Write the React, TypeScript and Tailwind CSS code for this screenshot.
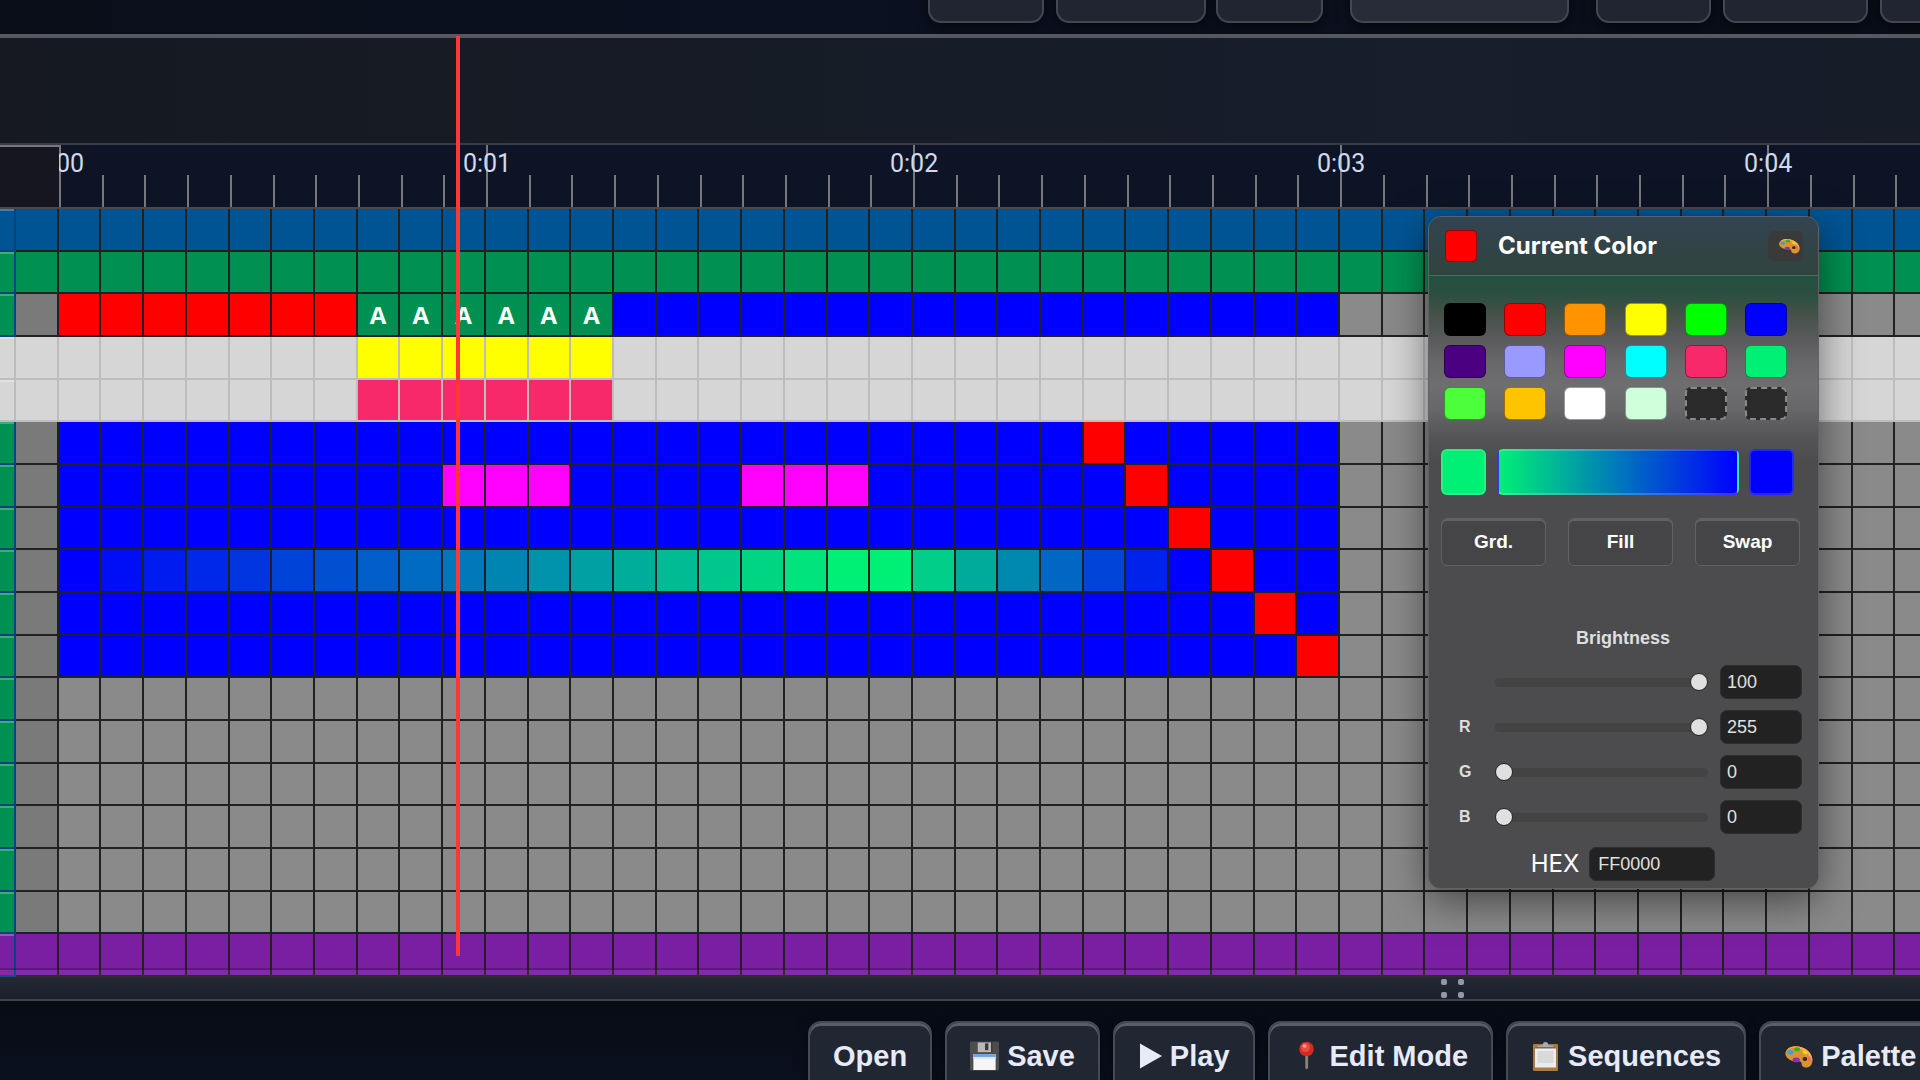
import React, { useState } from 'react';

const COLS = 45;
const BLUE = '#0000ff';
const RED = '#ff0000';
const GRAY = '#8a8a8a';
const LIGHT = '#d6d6d6';

const mix = (t: number) => `rgb(0, ${Math.round(240 * t)}, ${Math.round(255 - 138 * t)})`;

// col 0 is the first frame, col -1 is the lead-in
const cellColor = (row: number, col: number): string => {
  if (row === 0) return '#005493';
  if (row === 1) return '#009051';
  if (row === 17) return '#7b1fa2';
  if (row === 3 || row === 4) {
    if (col >= 7 && col <= 12) return row === 3 ? '#ffff00' : '#f7296b';
    return LIGHT;
  }
  if (col < 0) return '#7a7a7a';
  if (row > 10 || col > 29) return GRAY;
  if (row === 2) {
    if (col < 7) return RED;
    return col < 13 ? '#009051' : BLUE;
  }
  if (col === row + 19) return RED;
  if (row === 6 && ((col >= 9 && col <= 11) || (col >= 16 && col <= 18))) return '#ff00ff';
  if (row === 8) {
    if (col <= 18) return mix(col / 18);
    if (col <= 26) return mix((26 - col) / 7);
  }
  return BLUE;
};

const rowLabels = Array.from({ length: 18 }, (_, r) => {
  if (r === 0) return '#005493';
  if (r === 3 || r === 4) return LIGHT;
  return r === 17 ? '#7b1fa2' : '#009051';
});

const swatches = [
  '#000000', '#ff0000', '#ff9300', '#ffff00', '#00ff00', '#0000ff',
  '#4b0082', '#9999ff', '#ff00ff', '#00ffff', '#f7296b', '#00f076',
  '#4dff3a', '#ffc400', '#ffffff', '#d0ffdc', null, null
];

const PaletteIcon = ({ className }: { className: string }) => (
  <svg viewBox="0 0 32 32" preserveAspectRatio="none" className={className} aria-hidden="true">
    <path d="M4 7C9 2 19 3 25 8c6 5 8 13 5 18-3 4-8 4-10 1-1-2 0-4-2-5-3-1-5 1-9-1C2 18-1 12 4 7Z" fill="#d9942f" />
    <path d="M4 7C9 2 19 3 25 8c5 4 7 10 6 14-2-6-6-12-13-15C12 5 7 5 3 9Z" fill="#eeb352" />
    <ellipse cx="23" cy="19" rx="2.6" ry="2.4" fill="#3a2412" />
    <ellipse cx="7" cy="11" rx="3.2" ry="2.6" fill="#2aa6ea" />
    <ellipse cx="14.500" cy="7.500" rx="3.2" ry="2.4" fill="#38b21d" />
    <ellipse cx="23" cy="11" rx="3" ry="2" transform="rotate(35 23 11)" fill="#f3cf1d" />
    <ellipse cx="28" cy="19" rx="1.800" ry="3" transform="rotate(-20 28 19)" fill="#f36a5c" />
    <ellipse cx="13.500" cy="20" rx="4" ry="2.800" fill="#8d2cc4" />
  </svg>
);

const FloppyIcon = () => (
  <svg viewBox="0 0 30 30" className="w-[29px] h-[30px]" aria-hidden="true">
    <rect width="30" height="30" rx="1" fill="#4d4d4d" />
    <rect x="8" y="1" width="14" height="10" fill="#b9b9b9" />
    <rect x="15.500" y="2" width="3.500" height="7" fill="#3b3b3b" />
    <rect x="22" width="1" height="11" fill="#2c2c2c" />
    <rect x="3.500" y="13" width="23" height="16.500" fill="#f6f6f6" />
    <rect x="3.500" y="13" width="23" height="3" fill="#6aa5e6" />
    <rect x="3.500" y="16" width="23" height="2" fill="#d6e6f8" />
  </svg>
);

const PlayIcon = () => (
  <svg viewBox="0 0 24 26" className="w-6 h-[26px]" aria-hidden="true">
    <path d="M2 0.500 24 13 2 25.500Z" fill="#e6ebf7" />
  </svg>
);

const PinIcon = () => (
  <svg viewBox="0 0 29 30" className="w-[29px] h-[30px]" aria-hidden="true">
    <path d="M12.300 14h2.800v13l-1.400 1.500-1.400-1.500Z" fill="#8d8178" />
    <circle cx="13.500" cy="8" r="7.300" fill="#d42a22" />
    <circle cx="12.500" cy="6.500" r="4.500" fill="#ec4a3e" />
    <ellipse cx="11.500" cy="5" rx="2" ry="1.800" fill="#ff9c90" />
  </svg>
);

const ClipboardIcon = () => (
  <svg viewBox="0 0 29 30" className="w-[29px] h-[30px]" aria-hidden="true">
    <rect x="2" y="3" width="25" height="27" rx="1" fill="#a97b42" />
    <rect x="4" y="6" width="21" height="20.500" fill="#ececec" />
    <rect x="6.500" y="10" width="16" height="12" fill="#d9d9d9" />
    <path d="M7 6.500V4.500h4.500C12 2 12.500 1 14.500 1S17 2 17.500 4.500H22v2Z" fill="#a9adb0" />
    <rect x="4" y="6" width="21" height="1.500" fill="#6d6d6d" />
  </svg>
);

const toolbar = [
  { label: 'Open', icon: null },
  { label: 'Save', icon: <FloppyIcon /> },
  { label: 'Play', icon: <PlayIcon /> },
  { label: 'Edit Mode', icon: <PinIcon /> },
  { label: 'Sequences', icon: <ClipboardIcon /> },
  { label: 'Palette', icon: <PaletteIcon className="w-[29px] h-[27px]" /> }
];

const topButton = 'h-12 shrink-0 rounded-[13px] border-2 border-[#434751] shadow-[0_5px_14px_rgba(0,0,0,0.5)]';

const Header = () => (
  <header className="h-[34px] shrink-0 overflow-hidden flex items-end pb-[11px] pl-[928px] bg-[linear-gradient(90deg,#0a0e19,#0a1120_40%,#0a0e19)]">
    <button aria-label="Undo" className={`${topButton} w-[116px] bg-[#202531]`} />
    <button aria-label="Group" className={`${topButton} w-[150px] ml-3 bg-[#202531]`} />
    <button aria-label="Redo" className={`${topButton} w-[107px] ml-[10px] bg-[#202531]`} />
    <button aria-label="Mode" className={`${topButton} w-[219px] ml-[27px] bg-[#282c38]`} />
    <button aria-label="Copy" className={`${topButton} w-[115px] ml-[27px] bg-[#202531]`} />
    <button aria-label="Paste" className={`${topButton} w-[145px] ml-3 bg-[#202531]`} />
    <button aria-label="Cut" className={`${topButton} w-[115px] ml-3 bg-[#202531]`} />
  </header>
);

const Ruler = () => (
  <div className="flex h-[66px] shrink-0 border-t-2 border-b-2 border-t-[#3a3c44] border-b-[#48494e] bg-[#0d1425]">
    <div className="w-[61px] shrink-0 bg-[#15161f] border-t-2 border-r-2 border-[#77787c]" />
    <div className="flex-1 overflow-hidden -ml-[2px]">
      <div className="h-full grid grid-cols-[repeat(44,minmax(0,1fr))] items-end -mr-[18px]">
        {Array.from({ length: COLS - 1 }, (_, i) => (
          <div key={i} className={`relative border-l-2 border-[#77787c] ${i % 10 === 0 ? 'h-full' : 'h-8'}`}>
            {i % 10 === 0 && (
              <span className="absolute -left-px top-[3px] -translate-x-1/2 text-[25px] leading-8 font-['Roboto',sans-serif] text-[#d3d9ea]">
                0:0{i / 10}
              </span>
            )}
          </div>
        ))}
      </div>
    </div>
  </div>
);

const Tracks = () => (
  <div className="flex flex-1 min-h-0 overflow-hidden relative">
    <div className="w-4 shrink-0 grid grid-rows-[repeat(18,minmax(0,1fr))]">
      {rowLabels.map((color, r) => (
        <div
          key={r}
          className={`border-r-2 border-b-2 ${color === LIGHT ? 'border-[#bdbdbd]' : 'border-[#03457a]'} shadow-[inset_0_2px_0_rgba(255,255,255,0.25)]`}
          style={{ backgroundColor: color }}
        />
      ))}
    </div>
    <div className="flex-1 -mr-[18px] grid grid-rows-[repeat(18,minmax(0,1fr))] grid-cols-[repeat(45,minmax(0,1fr))]">
      {Array.from({ length: 18 * COLS }, (_, i) => {
        const row = Math.floor(i / COLS);
        const col = (i % COLS) - 1;
        const light = row === 3 || row === 4;
        return (
          <div
            key={i}
            className={`border-r-2 border-b-2 flex items-center justify-center text-2xl leading-6 font-bold text-white font-['Open_Sans',sans-serif] ${light ? 'border-[#bdbdbd]' : 'border-[#212121]'}`}
            style={{ backgroundColor: cellColor(row, col) }}
          >
            {row === 2 && col >= 7 && col <= 12 ? 'A' : ''}
          </div>
        );
      })}
    </div>
    {/* scrollbar track */}
    <div className="absolute inset-x-0 bottom-0 h-[9px] border-t-2 border-black/30 bg-white/5" />
  </div>
);

interface ChannelProps {
  label: string;
  name: string;
  max: number;
  value: number;
  onChange: (v: number) => void;
}

const Channel: React.FC<ChannelProps> = ({ label, name, max, value, onChange }) => (
  <div className="flex items-center h-[34px]">
    <label htmlFor={`${name}-range`} className="w-[54px] pl-[18px] text-base leading-6 font-bold text-[#dedede]">{label}</label>
    <input
      id={`${name}-range`}
      aria-label={name}
      type="range"
      min={0}
      max={max}
      value={value}
      onChange={(e) => onChange(Number(e.target.value))}
      className="w-[213px] h-[9px] appearance-none rounded-full bg-[#434343] [&::-webkit-slider-thumb]:appearance-none [&::-webkit-slider-thumb]:w-[18px] [&::-webkit-slider-thumb]:h-[18px] [&::-webkit-slider-thumb]:rounded-full [&::-webkit-slider-thumb]:bg-[#e0e0e0] [&::-webkit-slider-thumb]:border [&::-webkit-slider-thumb]:border-[#222222]"
    />
    <input
      aria-label={`${name} value`}
      type="text"
      value={value}
      onChange={(e) => onChange(Number(e.target.value) || 0)}
      className="ml-3 w-[82px] h-[34px] rounded-[7px] bg-[#222222] border border-[#2e2e2e] px-[6px] text-lg leading-6 text-[#e0e0e0]"
    />
  </div>
);

const smallButton = 'w-[105px] h-12 rounded-md border border-[#626264] bg-[#454547] text-[19px] leading-6 font-bold text-white shadow-[inset_0_2px_0_#626264]';

const ColorPanel = () => {
  const [brightness, setBrightness] = useState(100);
  const [rgb, setRgb] = useState([255, 0, 0]);
  const [hex, setHex] = useState('FF0000');

  const setChannel = (i: number, v: number) => {
    const next = rgb.map((c, n) => (n === i ? v : c));
    setRgb(next);
    setHex(next.map((c) => c.toString(16).padStart(2, '0')).join('').toUpperCase());
  };

  return (
    <section className="absolute right-[101px] top-[216px] w-[391px] overflow-hidden rounded-[13px] border border-[#5d6466] bg-[#4c4c4e] shadow-[0_12px_40px_rgba(0,0,0,0.5)]">
      <div className="h-[59px] pl-4 pr-[15px] flex items-center bg-linear-to-b from-[#334351] to-[#30443e] border-b border-[#4f6a60]">
        <span className="w-8 h-8 rounded-[5px] border border-black/40" style={{ backgroundColor: `rgb(${rgb.join(',')})` }} />
        <h2 className="ml-[21px] flex-1 text-2xl leading-8 font-bold text-white font-['Inter',sans-serif]">Current Color</h2>
        <button aria-label="Palettes" className="w-[35px] h-[30px] pl-[6px] rounded-md bg-[#3a3a3b] flex items-center justify-center">
          <PaletteIcon className="w-[22px] h-[18px]" />
        </button>
      </div>
      <div className="pl-3 pr-[13px] pt-[27px] pb-[7px] bg-[linear-gradient(180deg,#24503f_0px,#2b4f41_18px,#445149_38px,#59595b_62px,#68686b_86px,#6e6e71_110px,#68686b_132px,#555557_160px,#4c4c4e_184px)]">
        <div className="ml-[3px] w-[343px] grid grid-cols-[repeat(6,42px)] justify-between gap-y-[9px]">
          {swatches.map((color, i) => (
            <button
              key={i}
              aria-label={color || 'Empty slot'}
              className={`h-[33px] rounded-md ${color ? 'border border-black/40' : 'border-2 border-dashed border-[#8a8a8a] bg-[#2a2a2a]'}`}
              style={color ? { backgroundColor: color } : undefined}
            />
          ))}
        </div>

        <div className="mt-[29px] flex h-[46px]">
          <button aria-label="Gradient start" className="w-[45px] rounded-md bg-[#00f076] border-2 border-white/15" />
          <div className="ml-[11px] w-[242px] rounded-md border-2 border-white/20 bg-[linear-gradient(90deg,#00f076,#0000ff)]" />
          <button aria-label="Gradient end" className="ml-[10px] w-[45px] rounded-md bg-[#0000ff] border-2 border-white/15" />
        </div>

        <div className="mt-[23px] w-[359px] flex justify-between">
          <button className={smallButton}>Grd.</button>
          <button className={smallButton}>Fill</button>
          <button className={smallButton}>Swap</button>
        </div>

        <h3 className="mt-[60px] text-center text-lg leading-6 font-bold text-[#dedede]">Brightness</h3>
        <div className="mt-[15px] flex flex-col gap-[11px]">
          <Channel label="" name="Brightness" max={100} value={brightness} onChange={setBrightness} />
          <Channel label="R" name="Red" max={255} value={rgb[0]} onChange={(v) => setChannel(0, v)} />
          <Channel label="G" name="Green" max={255} value={rgb[1]} onChange={(v) => setChannel(1, v)} />
          <Channel label="B" name="Blue" max={255} value={rgb[2]} onChange={(v) => setChannel(2, v)} />
        </div>

        <div className="mt-[13px] flex items-center justify-center gap-[10px]">
          <label htmlFor="hex" className="text-2xl leading-8 text-white font-['Inter',sans-serif]">HEX</label>
          <input
            id="hex"
            type="text"
            value={hex}
            onChange={(e) => setHex(e.target.value)}
            className="w-[126px] h-[34px] rounded-[7px] bg-[#222222] border border-[#2e2e2e] px-2 text-lg leading-6 text-[#e0e0e0]"
          />
        </div>
      </div>
    </section>
  );
};

const App: React.FC = () => {
  return (
    <div className="relative h-screen overflow-hidden flex flex-col bg-[#0a0f1a] font-['Liberation_Sans',Arial,sans-serif]">
      <Header />
      <div className="h-[109px] shrink-0 border-t-4 border-[#55585f] bg-[linear-gradient(90deg,#161922,#161c26_40%,#171e2c_75%,#161c28)]" />
      <Ruler />
      <Tracks />

      {/* splitter */}
      <div className="h-6 shrink-0 flex items-center pl-[1441px] border-b-2 border-[#3f444f] bg-linear-to-b from-[#242934] to-[#1a202c]">
        <div className="grid grid-cols-2 gap-x-[11px] gap-y-[7px]">
          {[0, 1, 2, 3].map((n) => (
            <span key={n} className="w-[6px] h-[6px] rounded-[2px] bg-[#8f99ac]" />
          ))}
        </div>
      </div>

      <footer className="h-[79px] shrink-0 overflow-hidden flex items-start gap-[13px] pt-5 pl-[808px] bg-[linear-gradient(180deg,#070b14,#0a101e)]">
        {toolbar.map((item) => (
          <button
            key={item.label}
            className="h-[70px] shrink-0 px-[23px] flex items-center gap-2 rounded-[13px] border-2 border-[#464a54] bg-[#202632] text-[29px] leading-8 font-bold text-[#e6ebf7] shadow-[inset_0_3px_0_#5a5e68,0_5px_14px_rgba(0,0,0,0.5)]"
          >
            {item.icon}
            {item.label}
          </button>
        ))}
      </footer>

      {/* playhead */}
      <div className="absolute left-[456px] top-9 bottom-[124px] w-1 bg-[#ff3636]" />
      <ColorPanel />
    </div>
  );
};

export default App;
